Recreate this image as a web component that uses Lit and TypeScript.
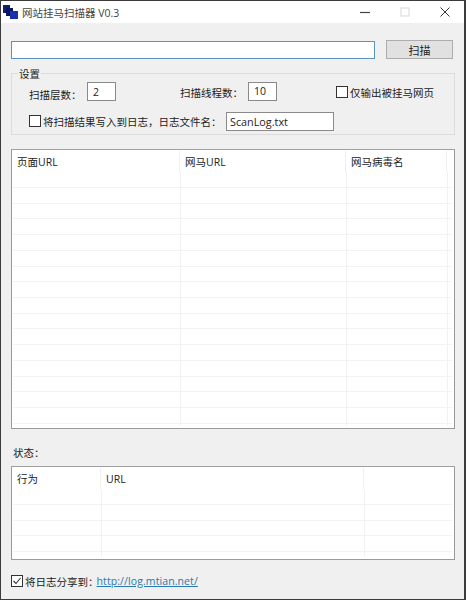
import { LitElement, html, css } from "lit";
import { customElement } from "lit/decorators.js";

const range = (n: number) => Array.from({ length: n }, (_, i) => i);

@customElement("app-root")
export class AppRoot extends LitElement {
  static styles = css`
    :host {
      width: 466px;
      height: 600px;
      box-sizing: border-box;
      border: 1px solid #3c3c3c;
      border-right-width: 2px;
      background: #f0f0f0;
      font-family: "Open Sans", "Noto Sans CJK SC", sans-serif;
      font-size: 10.5px;
      color: #222;
      overflow: hidden;
      display: flex;
      flex-direction: column;
    }
    .title {
      height: 22px;
      flex: none;
      background: #fff;
      display: flex;
      align-items: center;
      padding-left: 2px;
    }
    .title svg.logo { width: 15px; height: 15px; flex: none; }
    .title span { margin-left: 4px; font-size: 10.5px; color: #444; }
    .caps { margin-left: auto; margin-right: -1px; display: flex; align-items: center; }
    .cap { width: 40px; height: 22px; display: flex; align-items: center; justify-content: center; }
    .cap svg { width: 12px; height: 12px; }
    .content {
      flex: 1;
      display: flex;
      flex-direction: column;
      padding: 17px 9px 0 10px;
      min-height: 0;
    }
    .top { display: flex; gap: 11px; height: 20px; align-items: stretch; }
    .url {
      width: 364px;
      box-sizing: border-box;
      border: 1px solid #5c93b8;
      background: #fff;
      margin: 1px 0;
    }
    .btn {
      width: 67px;
      box-sizing: border-box;
      border: 1px solid #adadad;
      background: #e1e1e1;
      display: flex;
      align-items: center;
      justify-content: center;
      font-size: 11px;
      color: #222;
      margin-bottom: 1px;
    }
    fieldset {
      margin: 6px 0 0;
      padding: 0;
      height: 69px;
      box-sizing: border-box;
      border: 1px solid #dcdcdc;
      min-width: 0;
    }
    legend { margin-left: 6px; padding: 2px 1px 0; font-size: 10.5px; line-height: 12px; }
    .row { display: flex; align-items: flex-start; height: 19px; padding-left: 17px; }
    .r1 { margin-top: 2px; }
    .r2 { margin-top: 11px; }
    .box {
      box-sizing: border-box;
      background: #fff;
      border: 1px solid #8a8a8a;
      height: 19px;
      display: flex;
      align-items: center;
      padding-left: 5px;
      font-size: 10.5px;
      flex: none;
    }
    .n { width: 29px; }
    .lb1 { width: 58px; margin-top: 5px; }
    .lb2 { width: 68px; margin-left: 64px; margin-top: 3px; }
    .up { margin-top: -0.5px; }
    .chk {
      box-sizing: border-box;
      width: 12px;
      height: 12px;
      border: 1px solid #333;
      background: #fff;
      flex: none;
      margin: 3px 2px 0 0;
    }
    .only { margin-left: 59px; display: flex; align-items: flex-start; }
    .only .chk { margin-top: 4px; }
    .only span { margin-top: 3px; }
    .r2 span { margin-top: 2px; }
    .logn { width: 108px; margin-left: 4.5px; padding-left: 3px; font-size: 10.8px; }
    .grid {
      box-sizing: border-box;
      background: #fff;
      border: 1px solid #9a9a9a;
      border-top-color: #a0a0a0;
      position: relative;
      overflow: hidden;
      flex: none;
    }
    .g1 { height: 280px; margin-top: 14px; }
    .g2 { height: 94px; }
    .head { display: flex; height: 36px; box-sizing: border-box; padding-top: 1px; }
    .hc { box-sizing: border-box; padding: 4px 0 0 5px; line-height: 15px; border-right: 1px solid #efefef; height: 21px; font-size: 10.5px; }
    .rows { position: absolute; left: 1px; right: 2px; top: 37px; }
    .line { height: 15.73px; box-sizing: border-box; border-top: 1px solid #f3f3f3; }
    .vl { position: absolute; top: 22px; bottom: 2px; width: 1px; background: #f2f2f2; }
    .status { height: 37px; box-sizing: border-box; display: flex; align-items: center; padding: 10px 0 0 2px; flex: none; }
    .foot { display: flex; align-items: center; margin-top: 15px; height: 12px; flex: none; }
    .foot .tick { width: 12px; height: 12px; flex: none; margin-right: 2px; }
    a { color: #2a78b0; text-decoration: underline; margin-left: -2px; letter-spacing: 0.1px; }
  `;

  private grid(cls: string, cols: number[], names: string[], lines: number, vlines: number[]) {
    return html`<div class="grid ${cls}">
      <div class="head">
        ${names.map((n, i) => html`<div class="hc" style="width:${cols[i]}px">${n}</div>`)}
      </div>
      <div class="rows">${range(lines).map(() => html`<div class="line"></div>`)}</div>
      ${vlines.map((x) => html`<div class="vl" style="left:${x}px"></div>`)}
    </div>`;
  }

  render() {
    return html`
      <div class="title">
        <svg class="logo" viewBox="0 0 15 15">
          <rect x="0" y="0" width="7" height="8" fill="#101c70"></rect>
          <rect x="3" y="3" width="7" height="8" fill="#0a1560"></rect>
          <rect x="7" y="6" width="8" height="8" fill="#1c2fb0"></rect>
        </svg>
        <span>网站挂马扫描器 V0.3</span>
        <div class="caps">
          <div class="cap"><svg viewBox="0 0 12 12"><path d="M1 6.5h10" stroke="#444" stroke-width="1.2"></path></svg></div>
          <div class="cap"><svg viewBox="0 0 12 12"><rect x="2" y="2" width="8" height="8" fill="none" stroke="#d8d8d8"></rect></svg></div>
          <div class="cap"><svg viewBox="0 0 12 12"><path d="M1.5 1.5l9 9M10.5 1.5l-9 9" stroke="#333" stroke-width="1"></path></svg></div>
        </div>
      </div>
      <div class="content">
        <div class="top">
          <div class="url"></div>
          <div class="btn">扫描</div>
        </div>
        <fieldset>
          <legend>设置</legend>
          <div class="row r1">
            <span class="lb1">扫描层数：</span>
            <div class="box n">2</div>
            <span class="lb2">扫描线程数：</span>
            <div class="box n up">10</div>
            <div class="only"><div class="chk"></div><span>仅输出被挂马网页</span></div>
          </div>
          <div class="row r2">
            <div class="chk"></div>
            <span>将扫描结果写入到日志，日志文件名：</span>
            <div class="box logn">ScanLog.txt</div>
          </div>
        </fieldset>
        ${this.grid("g1", [168, 166, 101], ["页面URL", "网马URL", "网马病毒名"], 16, [168, 334, 435])}
        <div class="status">状态：</div>
        ${this.grid("g2", [89, 263], ["行为", "URL"], 4, [89, 352])}
        <div class="foot">
          <svg class="tick" viewBox="0 0 12 12">
            <rect x="0.5" y="0.5" width="11" height="11" fill="#fff" stroke="#333"></rect>
            <path d="M2.5 6l2.5 2.5 4.5-5.5" fill="none" stroke="#333" stroke-width="1.1"></path>
          </svg>
          <span>将日志分享到：</span><a>http://log.mtian.net/</a>
        </div>
      </div>
    `;
  }
}
